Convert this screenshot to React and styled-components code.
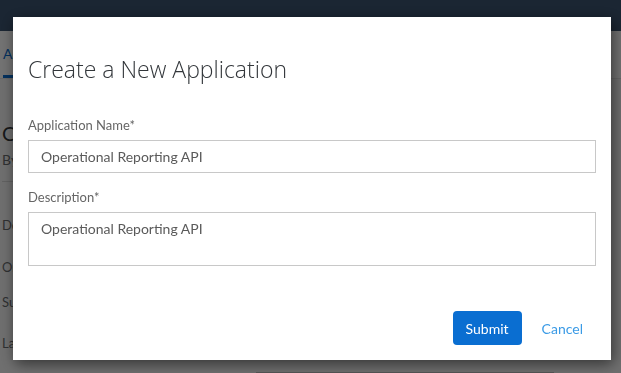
import styled, { createGlobalStyle } from 'styled-components';

const GlobalStyle = createGlobalStyle`
  html, body {
    margin: 0;
    padding: 0;
    width: 621px;
    height: 373px;
    overflow: hidden;
    background: #f7f7f7;
    font-family: 'Lato', 'Liberation Sans', sans-serif;
  }
`;

const Page = styled.div`
  width: 621px;
  height: 373px;
  overflow: hidden;
  display: flex;
  flex-direction: column;
  background: #f7f7f7;
`;

const ShellBar = styled.header`
  height: 31px;
  background: #3c5471;
  flex-shrink: 0;
`;

const TabBar = styled.nav`
  height: 47px;
  flex-shrink: 0;
  background: #ffffff;
  display: flex;
  align-items: stretch;
  padding-left: 3px;
  border-bottom: 1px solid #e5e5e5;
`;

const Tab = styled.div`
  display: flex;
  align-items: center;
  padding: 0 8px 0 0;
  font-size: 14px;
  color: #0a6ed1;
  border-bottom: 3px solid #0a6ed1;
`;

const Content = styled.main`
  padding: 42px 0 0 2px;
  display: flex;
  flex-direction: column;
  flex-shrink: 0;
`;

const ObjectTitle = styled.h2`
  margin: 0;
  font-size: 20px;
  line-height: 24px;
  font-weight: 400;
  color: #32363a;
`;

const ObjectSub = styled.div`
  font-size: 14px;
  line-height: 18px;
  color: #6a6d70;
  margin-top: 6px;
`;

const Divider = styled.hr`
  width: 200px;
  margin: 12px 0 0;
  border: 0;
  border-top: 1px solid #d9d9d9;
`;

const FieldList = styled.div`
  margin-top: 22px;
  display: flex;
  flex-direction: column;
`;

const FieldRow = styled.div`
  display: flex;
  align-items: center;
  flex-shrink: 0;
  height: ${p => p.$h}px;
  font-size: 13px;
  color: #6a6d70;
`;

const FieldBox = styled.div`
  margin: 2px 0 0 254px;
  width: 296px;
  height: 30px;
  flex-shrink: 0;
  border: 1px solid #bfbfbf;
  background: #fff;
`;

const Overlay = styled.div`
  position: fixed;
  inset: 0;
  background: rgba(0, 0, 0, 0.55);
  display: flex;
  align-items: flex-start;
  padding: 17px 0 0 13px;
`;

const Dialog = styled.section`
  width: 598px;
  height: 343px;
  box-sizing: border-box;
  background: #ffffff;
  box-shadow: 2px 4px 14px rgba(0, 0, 0, 0.55);
  display: flex;
  flex-direction: column;
  padding: 0 15px 15px;
`;

const Title = styled.h1`
  margin: 0;
  padding: 37px 0 0;
  font-family: 'Open Sans', 'Liberation Sans', sans-serif;
  font-size: 23px;
  line-height: 30px;
  font-weight: 300;
  color: #32363a;
`;

const Form = styled.div`
  display: flex;
  flex-direction: column;
  margin-top: 33px;
  gap: 16px;
`;

const Field = styled.label`
  display: flex;
  flex-direction: column;
  gap: 6px;
`;

const Label = styled.span`
  font-size: 13px;
  line-height: 17px;
  color: #666666;
`;

const Input = styled.input`
  box-sizing: border-box;
  width: 568px;
  height: 33px;
  border: 1px solid #c8c8c8;
  padding: 0 12px;
  font-family: inherit;
  font-size: 14px;
  color: #5a5a5a;
  outline: none;
`;

const TextArea = styled.textarea`
  box-sizing: border-box;
  width: 568px;
  height: 54px;
  border: 1px solid #c8c8c8;
  padding: 7px 12px;
  font-family: inherit;
  font-size: 14px;
  line-height: 18px;
  color: #5a5a5a;
  resize: none;
  outline: none;
`;

const Footer = styled.footer`
  margin-top: auto;
  display: flex;
  justify-content: flex-end;
  align-items: center;
  gap: 20px;
  padding-right: 13px;
`;

const Button = styled.button`
  font-family: inherit;
  font-size: 14px;
  height: 34px;
  border-radius: 4px;
  cursor: pointer;
  border: 0;
  padding: ${p => (p.$primary ? '0 13px' : '0')};
  background: ${p => (p.$primary ? '#0a6ed1' : 'transparent')};
  color: ${p => (p.$primary ? '#ffffff' : '#3b9be6')};
  width: ${p => (p.$primary ? '69px' : 'auto')};
`;

const App = () => {
  return (
    <>
      <GlobalStyle />
      <Page>
        <ShellBar />
        <TabBar>
          <Tab>Applications</Tab>
        </TabBar>
        <Content>
          <ObjectTitle>Create Application</ObjectTitle>
          <ObjectSub>By Administrator</ObjectSub>
          <Divider />
          <FieldList>
            <FieldRow $h={42}>Description</FieldRow>
            <FieldRow $h={42}>Organization</FieldRow>
            <FieldRow $h={28}>Subscription</FieldRow>
            <FieldRow $h={54}>Last Modified</FieldRow>
            <FieldBox />
          </FieldList>
        </Content>
      </Page>
      <Overlay>
        <Dialog role="dialog">
          <Title>Create a New Application</Title>
          <Form>
            <Field>
              <Label>Application Name*</Label>
              <Input defaultValue="Operational Reporting API" />
            </Field>
            <Field>
              <Label>Description*</Label>
              <TextArea defaultValue="Operational Reporting API" />
            </Field>
          </Form>
          <Footer>
            <Button $primary>Submit</Button>
            <Button>Cancel</Button>
          </Footer>
        </Dialog>
      </Overlay>
    </>
  );
};

export default App;
